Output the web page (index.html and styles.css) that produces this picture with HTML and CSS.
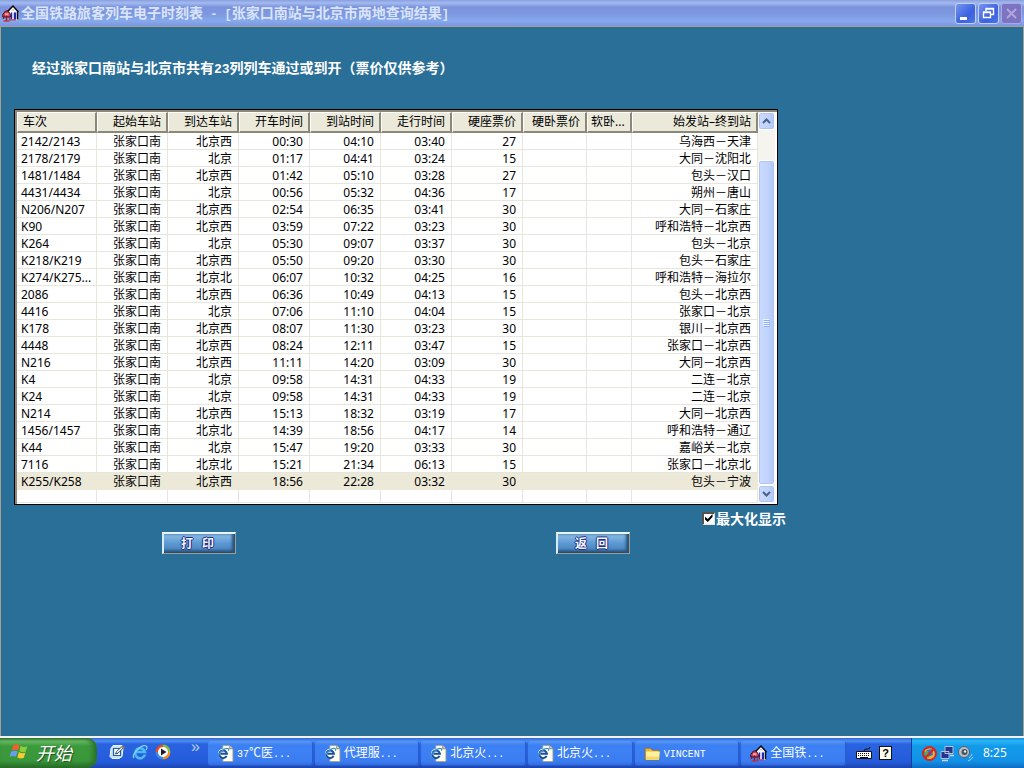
FILE: index.html
```html
<!DOCTYPE html>
<html lang="zh-CN">
<head>
<meta charset="utf-8">
<title>全国铁路旅客列车电子时刻表</title>
<link rel="stylesheet" href="styles.css">
</head>
<body>
<svg class="defs" aria-hidden="true">
  <symbol id="house" viewBox="0 0 17 17">
    <path d="M6.500 6.500 11 1.500l5 5.500v8H8z" fill="#f6f4ff"/>
    <path d="M5.500 6.500 11 1l5.500 6" fill="none" stroke="#0b0b12" stroke-width="1.500"/>
    <path d="M15.500 6.500v8" stroke="#0b0b12" stroke-width="1.500"/>
    <path d="M10 4.200h2v1.300h-2z" fill="#ecc54c"/>
    <path d="M9 7.500h5v7H9z" fill="#c9cdf4"/>
    <path d="M12 7.500h2v7h-2zM9 7.500h1v7H9z" fill="#1b2bb8"/>
    <path d="M.8 9.500 3.500 6H6l2.700 3.500V12H.8z" fill="#c9404e" stroke="#4c0a14" stroke-width="1"/>
    <path d="M3 8.200h3.500v2.300H3z" fill="#f0a3a8"/>
    <path d="M1.500 12v2M8 12v3.500M4.500 10.500V16" stroke="#8e1522" stroke-width="1.300"/>
    <path d="M1.500 16h6" stroke="#d61f2c" stroke-width="1.300"/>
    <path d="M9 14.800h5" stroke="#d61f2c"/>
  </symbol>
  <symbol id="iepage" viewBox="0 0 16 16">
    <path d="M5.500.5h6.500l3 3v12H5.500z" fill="#fffef2" stroke="#a3a08c" stroke-width=".8"/>
    <path d="M12 .5v3h3" fill="#dcdac8" stroke="#77755f" stroke-width=".8"/>
    <circle cx="5.700" cy="8.300" r="4.800" fill="#fffef2"/>
    <path d="M9 10.300A3.600 3.600 0 1 1 9.300 8.200H3.500" fill="none" stroke="#174f9f" stroke-width="1.900"/>
    <path d="M1.500 13C-1.500 11 6 2.500 10.300 3.300q1.200.5.400 2.200" fill="none" stroke="#3b8fd8" stroke-width="1.200"/>
  </symbol>
</svg>

<div class="window">
  <header class="titlebar">
    <svg class="app-icon" aria-hidden="true"><use href="#house"/></svg>
    <h1 class="title">全国铁路旅客列车电子时刻表<span class="mono"> - [</span>张家口南站与北京市两地查询结果<span class="mono">]</span></h1>
    <div class="controls">
      <button class="ctl" type="button" aria-label="最小化"><svg viewBox="0 0 19 19"><path d="M4 13h7v3H4z" fill="#fff"/></svg></button>
      <button class="ctl" type="button" aria-label="还原"><svg viewBox="0 0 19 19"><path d="M7 7V4.500h7.500v6H12M7 5h8M4.500 8.500h7v5h-7zM4 8h8" fill="none" stroke="#fff" stroke-width="1.400"/></svg></button>
      <button class="ctl ctl-close" type="button" aria-label="关闭"><svg viewBox="0 0 19 19"><path d="M5 5l9 9M14 5l-9 9" stroke="#b6a4dc" stroke-width="2"/></svg></button>
    </div>
  </header>

  <main class="content">
    <h2 class="summary">经过张家口南站与北京市共有<span class="mono">23</span>列列车通过或到开（票价仅供参考）</h2>
    <div class="panel">
      <table class="trains">
        <colgroup><col class="c-train"><col class="c-std"><col class="c-std"><col class="c-std"><col class="c-std"><col class="c-std"><col class="c-std"><col class="c-hard"><col class="c-soft"><col></colgroup>
        <thead><tr><th>车次</th><th>起始车站</th><th>到达车站</th><th>开车时间</th><th>到站时间</th><th>走行时间</th><th>硬座票价</th><th>硬卧票价</th><th>软卧...</th><th>始发站–终到站</th></tr></thead>
        <tbody>
        <tr><td>2142/2143</td><td>张家口南</td><td>北京西</td><td>00:30</td><td>04:10</td><td>03:40</td><td>27</td><td></td><td></td><td>乌海西－天津</td></tr>
        <tr><td>2178/2179</td><td>张家口南</td><td>北京</td><td>01:17</td><td>04:41</td><td>03:24</td><td>15</td><td></td><td></td><td>大同－沈阳北</td></tr>
        <tr><td>1481/1484</td><td>张家口南</td><td>北京西</td><td>01:42</td><td>05:10</td><td>03:28</td><td>27</td><td></td><td></td><td>包头－汉口</td></tr>
        <tr><td>4431/4434</td><td>张家口南</td><td>北京</td><td>00:56</td><td>05:32</td><td>04:36</td><td>17</td><td></td><td></td><td>朔州－唐山</td></tr>
        <tr><td>N206/N207</td><td>张家口南</td><td>北京西</td><td>02:54</td><td>06:35</td><td>03:41</td><td>30</td><td></td><td></td><td>大同－石家庄</td></tr>
        <tr><td>K90</td><td>张家口南</td><td>北京西</td><td>03:59</td><td>07:22</td><td>03:23</td><td>30</td><td></td><td></td><td>呼和浩特－北京西</td></tr>
        <tr><td>K264</td><td>张家口南</td><td>北京</td><td>05:30</td><td>09:07</td><td>03:37</td><td>30</td><td></td><td></td><td>包头－北京</td></tr>
        <tr><td>K218/K219</td><td>张家口南</td><td>北京西</td><td>05:50</td><td>09:20</td><td>03:30</td><td>30</td><td></td><td></td><td>包头－石家庄</td></tr>
        <tr><td>K274/K275...</td><td>张家口南</td><td>北京北</td><td>06:07</td><td>10:32</td><td>04:25</td><td>16</td><td></td><td></td><td>呼和浩特－海拉尔</td></tr>
        <tr><td>2086</td><td>张家口南</td><td>北京西</td><td>06:36</td><td>10:49</td><td>04:13</td><td>15</td><td></td><td></td><td>包头－北京西</td></tr>
        <tr><td>4416</td><td>张家口南</td><td>北京</td><td>07:06</td><td>11:10</td><td>04:04</td><td>15</td><td></td><td></td><td>张家口－北京</td></tr>
        <tr><td>K178</td><td>张家口南</td><td>北京西</td><td>08:07</td><td>11:30</td><td>03:23</td><td>30</td><td></td><td></td><td>银川－北京西</td></tr>
        <tr><td>4448</td><td>张家口南</td><td>北京西</td><td>08:24</td><td>12:11</td><td>03:47</td><td>15</td><td></td><td></td><td>张家口－北京西</td></tr>
        <tr><td>N216</td><td>张家口南</td><td>北京西</td><td>11:11</td><td>14:20</td><td>03:09</td><td>30</td><td></td><td></td><td>大同－北京西</td></tr>
        <tr><td>K4</td><td>张家口南</td><td>北京</td><td>09:58</td><td>14:31</td><td>04:33</td><td>19</td><td></td><td></td><td>二连－北京</td></tr>
        <tr><td>K24</td><td>张家口南</td><td>北京</td><td>09:58</td><td>14:31</td><td>04:33</td><td>19</td><td></td><td></td><td>二连－北京</td></tr>
        <tr><td>N214</td><td>张家口南</td><td>北京西</td><td>15:13</td><td>18:32</td><td>03:19</td><td>17</td><td></td><td></td><td>大同－北京西</td></tr>
        <tr><td>1456/1457</td><td>张家口南</td><td>北京北</td><td>14:39</td><td>18:56</td><td>04:17</td><td>14</td><td></td><td></td><td>呼和浩特－通辽</td></tr>
        <tr><td>K44</td><td>张家口南</td><td>北京</td><td>15:47</td><td>19:20</td><td>03:33</td><td>30</td><td></td><td></td><td>嘉峪关－北京</td></tr>
        <tr><td>7116</td><td>张家口南</td><td>北京北</td><td>15:21</td><td>21:34</td><td>06:13</td><td>15</td><td></td><td></td><td>张家口－北京北</td></tr>
        <tr class="selected"><td>K255/K258</td><td>张家口南</td><td>北京西</td><td>18:56</td><td>22:28</td><td>03:32</td><td>30</td><td></td><td></td><td>包头－宁波</td></tr>
        <tr class="blank"><td></td><td></td><td></td><td></td><td></td><td></td><td></td><td></td><td></td><td></td></tr>
        </tbody>
      </table>
      <div class="scrollbar">
        <button class="arrow" type="button" aria-label="向上滚动"><svg viewBox="0 0 9 6"><path d="M1 5l3.500-3.500L8 5" fill="none" stroke="#4d6185" stroke-width="2"/></svg></button>
        <div class="track"><div class="thumb"><svg viewBox="0 0 7 8"><path d="M0 .5h6M0 2.500h6M0 4.500h6M0 6.500h6" stroke="#eef4fe"/><path d="M1 1.500h6M1 3.500h6M1 5.500h6M1 7.500h6" stroke="#8cb0f8"/></svg></div></div>
        <button class="arrow" type="button" aria-label="向下滚动"><svg viewBox="0 0 9 6"><path d="M1 1l3.500 3.500L8 1" fill="none" stroke="#4d6185" stroke-width="2"/></svg></button>
      </div>
    </div>
    <div class="options">
      <input class="check" type="checkbox" id="max" checked><label for="max">最大化显示</label>
    </div>
    <div class="actions">
      <button class="action" type="button"><span>打</span><span>印</span></button>
      <button class="action" type="button"><span>返</span><span>回</span></button>
    </div>
  </main>
</div>

<footer class="taskbar">
  <button class="start" type="button">
    <svg viewBox="0 0 20 18" aria-hidden="true"><path d="M4 3q3-2 6 0L8.500 8q-3-1.500-6 0z" fill="#f0602c"/><path d="M11 3.500q3 2 6.500.5L16 9q-3 1.500-6-.5z" fill="#8fce3a"/><path d="M2.200 9q3-1.500 6 0L6.500 14q-3-1.500-6 0z" fill="#6a9df2"/><path d="M9.500 9.500q3 2 6.200.5L14 15q-3 1.500-6-.5z" fill="#fccb32"/></svg>
    <span>开始</span>
  </button>
  <nav class="quick">
    <button type="button" aria-label="显示桌面"><svg viewBox="0 0 16 16"><path d="M4 1.500h9l1 3-1 8-3 2H3l-2-2 1-8z" fill="#c5e2f5" stroke="#e9f5fd"/><path d="M4.500 4.500h7v7h-7z" fill="#fff" stroke="#1f5f96" stroke-width="1.200"/><path d="M6.500 10l1-2.500L13 2.500l1.500 1.300L9 9z" fill="#f3f3ea" stroke="#24394f" stroke-width=".8"/><path d="M13 2.500l1.500 1.300 1-1.300" fill="none" stroke="#c0752c" stroke-width="1.200"/><path d="M6 9.500h3" stroke="#1f5f96"/></svg></button>
    <button type="button" aria-label="Internet Explorer"><svg viewBox="0 0 16 16"><path d="M13 10.500A5 5 0 1 1 13 8H4" fill="none" stroke="#4dbaf4" stroke-width="2.600"/><path d="M2 14C-1 11 9 0 14 2q2 1 0 4" fill="none" stroke="#88d7fa" stroke-width="1.200"/></svg></button>
    <button type="button" aria-label="媒体播放器"><svg viewBox="0 0 16 16"><path d="M8 8V.5A7.500 7.500 0 0 0 .5 8z" fill="#e44c24"/><path d="M8 8H.5A7.500 7.500 0 0 0 8 15.500z" fill="#3c8be0"/><path d="M8 8v7.500A7.500 7.500 0 0 0 15.500 8z" fill="#f28b22"/><path d="M8 8h7.500A7.500 7.500 0 0 0 8 .5z" fill="#8cba3a"/><circle cx="8" cy="8" r="5" fill="#fff"/><path d="M6 4.500 11.500 8 6 11.500z" fill="#1a1a2c"/></svg></button>
    <span class="more">»</span>
  </nav>
  <div class="tasks">
    <button class="task" type="button"><svg><use href="#iepage"/></svg><span><i>37</i>℃医<i>...</i></span></button>
    <button class="task" type="button"><svg><use href="#iepage"/></svg><span>代理服<i>...</i></span></button>
    <button class="task" type="button"><svg><use href="#iepage"/></svg><span>北京火<i>...</i></span></button>
    <button class="task" type="button"><svg><use href="#iepage"/></svg><span>北京火<i>...</i></span></button>
    <button class="task" type="button"><svg viewBox="0 0 16 16"><path d="M1 3h5l2 2h6v9H2L1 13z" fill="#e9b93d" stroke="#8a6a1a" stroke-width=".7"/><path d="M2 6h13l-1 8H2z" fill="#fff0a0"/><path d="M2 11h12.500l-.5 3H2z" fill="#f6d766"/></svg><span><i>VINCENT</i></span></button>
    <button class="task" type="button"><svg><use href="#house"/></svg><span>全国铁<i>...</i></span></button>
  </div>
  <div class="lang">
    <svg viewBox="0 0 16 16" role="img" aria-label="键盘"><path d="M8 6q0-2 3-2t3-2" fill="none" stroke="#111"/><path d="M.5 6.500h15v7H.5z" fill="#fff" stroke="#111"/><path d="M2 8.500h12M2 10.500h12" stroke="#111" stroke-dasharray="1 1"/><path d="M4 12.500h8" stroke="#111"/></svg>
    <span class="help">?</span>
  </div>
  <div class="tray">
    <svg viewBox="0 0 17 17" aria-hidden="true"><path d="M3 5l9-3 3 10-8 3z" fill="#e9b33c"/><path d="M6 5l5-1 1 6-5 2z" fill="#3b75c7"/><path d="M3 9l3-4 2 8z" fill="#5aa843"/><circle cx="8.500" cy="8.500" r="6.500" fill="none" stroke="#d8261c" stroke-width="2"/><path d="M13.500 3.500l-10 10" stroke="#d8261c" stroke-width="2"/></svg>
    <svg viewBox="0 0 17 17" aria-hidden="true"><path d="M6 1.500h8v7H6zM2 6.500h8v7H2z" fill="#25348b" stroke="#b5bdd9"/><path d="M3 15.500h6M11 10.500h4" stroke="#cdd3e6" stroke-width="1.500"/></svg>
    <svg viewBox="0 0 17 17" aria-hidden="true"><circle cx="7" cy="7" r="5.500" fill="#b9c0c8" stroke="#54606e"/><circle cx="7.500" cy="7" r="3" fill="#48525f"/><circle cx="8" cy="6.500" r="1.200" fill="#e4e8ec"/><path d="M12 13q2-1 3-4M11 16q3-1 5-4" fill="none" stroke="#9fd4f6"/></svg>
    <time class="clock">8:25</time>
  </div>
</footer>
</body>
</html>
```

FILE: styles.css
```css
* { box-sizing: border-box; }

body {
  margin: 0;
  min-height: 100vh;
  display: flex;
  flex-direction: column;
  background: #2a6f98;
  font: 12px/16px "Noto Sans", "Noto Sans CJK SC", sans-serif;
}

button {
  margin: 0;
  padding: 0;
  border: 0;
  background: none;
  font: inherit;
  color: inherit;
}

.defs { display: none; }

.window {
  flex: 1;
  display: flex;
  flex-direction: column;
  border-bottom: 2px solid #f4f2ea;
}

/* Title bar */
.titlebar {
  display: flex;
  align-items: center;
  height: 26px;
  padding: 0 2px;
  background: linear-gradient(#8a9fe0 0, #a3bbf0 3px, #7c93dd 7px, #7e98e0 14px, #86a9ec 21px, #7d95dd 26px);
  color: #d9e4fa;
}
.app-icon { width: 17px; height: 17px; margin-right: 2px; }
.title {
  flex: 1;
  margin: 0;
  font: bold 14px/20px "Noto Sans CJK SC", sans-serif;
}
.mono {
  font-family: "Liberation Mono", monospace;
  font-size: 12px;
  white-space: pre;
}
.controls { display: flex; gap: 2px; }
.ctl {
  width: 21px;
  height: 21px;
  border: 1px solid #c3d0f6;
  border-radius: 3px;
  background: linear-gradient(135deg, #7595ef, #3c62df 60%, #4c74e8);
}
.ctl svg { display: block; width: 19px; height: 19px; }
.ctl-close { border-color: #a9a8e2; background: #7c74c2; }

/* Client area */
.content {
  flex: 1;
  padding: 30px 13px 16px;
  border: 1px solid #a89f8e;
  border-bottom: 0;
}
.summary {
  margin: 0 0 31px 18px;
  color: #fff;
  font: bold 14px/20px "Noto Sans CJK SC", sans-serif;
}
.summary .mono { font-size: 13px; line-height: 16px; }
.panel {
  display: flex;
  max-width: 764px;
  padding: 2px 2px 1px;
  border: 1px solid #000;
  background: #fff;
  box-shadow: inset 2px 2px 0 #8d897c;
}

/* Train list */
.trains {
  flex: 1;
  min-width: 0;
  table-layout: fixed;
  border-collapse: separate;
  border-spacing: 0;
  background: #fff;
}
.c-train { width: 80px; }
.c-std { width: 71px; }
.c-hard { width: 64px; }
.c-soft { width: 43px; }
.trains th,
.trains td {
  overflow: hidden;
  white-space: nowrap;
  text-align: right;
  color: #000;
}
.trains th {
  height: 21px;
  padding: 0 5px 0 3px;
  border: solid;
  border-width: 1px 2px 2px 1px;
  border-color: #fff #8b887a #8b887a #fff;
  background: #ebe9da;
  font-weight: normal;
  line-height: 18px;
}
.trains td {
  height: 17px;
  padding: 0 6px 0 4px;
  border-right: 1px solid #e7e6dc;
  box-shadow: inset 0 -1px #e7e6dc;
  line-height: 17px;
}
.trains th:first-child,
.trains td:first-child { text-align: left; }
.trains th:first-child { padding-left: 5px; }
.trains td:first-child { padding-right: 0; }
.trains .selected td { background: #ece9d8; border-color: #ece9d8; box-shadow: none; }
.trains .blank td { height: 13px; }

/* Scroll bar */
.scrollbar {
  display: flex;
  flex-direction: column;
  width: 17px;
  background: #f5f4ee;
}
.arrow,
.thumb {
  display: flex;
  align-items: center;
  justify-content: center;
  border: 1px solid #fff;
  border-radius: 3px;
  background: linear-gradient(90deg, #cbdafe, #c1d3fc 60%, #b2c6f6);
  box-shadow: inset 0 0 0 1px #aec4f4;
}
.arrow { height: 18px; }
.arrow svg { width: 9px; height: 6px; }
.track { flex: 1; display: flex; padding-top: 30px; }
.thumb { flex: 1; }
.thumb svg { width: 7px; height: 8px; }

/* Options and actions */
.options {
  display: flex;
  align-items: center;
  justify-content: flex-end;
  gap: 1px;
  max-width: 772px;
  padding: 5px 0 6px;
  color: #fff;
  font: bold 14px/16px "Noto Sans CJK SC", sans-serif;
}
.check {
  appearance: none;
  width: 13px;
  height: 13px;
  margin: 0;
  border: solid;
  border-width: 2px 1px 1px 2px;
  border-color: #55534c #e7e4d8 #e7e4d8 #55534c;
  background: #fff;
}
.check:checked::before {
  content: "";
  display: block;
  width: 10px;
  height: 9px;
  background: #000;
  clip-path: polygon(10% 35%, 38% 60%, 85% 5%, 85% 38%, 38% 95%, 10% 68%);
}
.actions { display: flex; gap: 320px; padding-left: 148px; }
.action {
  display: flex;
  align-items: center;
  justify-content: center;
  gap: 9px;
  width: 74px;
  height: 22px;
  padding: 0 4px 2px 0;
  border: solid;
  border-width: 2px 1px 1px 2px;
  border-color: #e8f6fc #a59c8c #a59c8c #d8ecf6;
  background: linear-gradient(#8fc0ea, #5f9bd4 45%, #4f8ac4 75%, #1d486f);
  box-shadow: inset -3px 0 3px #24527d;
  color: #f2f6ff;
  font: bold 12px/16px "Noto Sans CJK SC", sans-serif;
  text-shadow: 1px 0 #202c80, -1px 0 #202c80, 0 1px #202c80, 0 -1px #202c80;
}

/* Taskbar */
.taskbar {
  display: flex;
  height: 30px;
  background: linear-gradient(#3168d5, #4a8df4 3px, #2a63e0 6px, #245bdb 24px, #1c44ad);
  color: #fff;
  font-family: "Noto Sans CJK SC", sans-serif;
}
.start {
  display: flex;
  align-items: center;
  gap: 6px;
  width: 97px;
  padding: 0 0 3px 9px;
  border-radius: 0 10px 10px 0;
  background: linear-gradient(#2f7a30, #6bbb69 3px, #3b9a3b 8px, #3a963a 23px, #256a26);
  box-shadow: inset -4px 0 5px #2a702c;
  font: italic 18px/24px "Noto Sans CJK SC", sans-serif;
  text-shadow: 1px 1px 1px #1f4d1f;
}
.start svg { width: 21px; height: 19px; }
.quick {
  display: flex;
  align-items: center;
  gap: 7px;
  width: 111px;
  padding: 0 0 2px 12px;
}
.quick button,
.quick svg { display: block; width: 16px; height: 16px; }
.more {
  padding: 0 0 10px 13px;
  font: 16px/16px "Liberation Sans", sans-serif;
  color: #b9d0fa;
}
.tasks {
  flex: 1;
  display: flex;
  align-items: center;
  gap: 2px;
}
.task {
  flex: 1;
  display: flex;
  align-items: center;
  gap: 3px;
  height: 25px;
  padding-left: 9px;
  border-radius: 3px;
  background: linear-gradient(#5c97f7, #3c81f3 4px, #3c7ef2 20px, #3068dc);
  box-shadow: inset -1px -1px 0 #2a5cc8;
  white-space: nowrap;
}
.task svg { flex: none; width: 17px; height: 17px; }
.task i {
  font: normal 10px/16px "Liberation Mono", monospace;
}
.lang {
  display: flex;
  align-items: center;
  gap: 7px;
  width: 65px;
  padding-left: 10px;
}
.lang svg { width: 16px; height: 16px; }
.help {
  width: 13px;
  height: 14px;
  border: 1px solid #111;
  background: #fffff0;
  color: #000;
  font: bold 11px/12px "Liberation Sans", sans-serif;
  text-align: center;
}
.tray {
  display: flex;
  align-items: center;
  gap: 1px;
  width: 113px;
  padding-left: 9px;
  border-left: 1px solid #10409c;
  background: linear-gradient(#1390e0, #2cb4f4 3px, #129bea 8px, #1291e6 23px, #0d6cc4);
}
.tray svg { width: 17px; height: 17px; }
.clock {
  padding-left: 8px;
  font: 12px/16px "Noto Sans", sans-serif;
}
```
